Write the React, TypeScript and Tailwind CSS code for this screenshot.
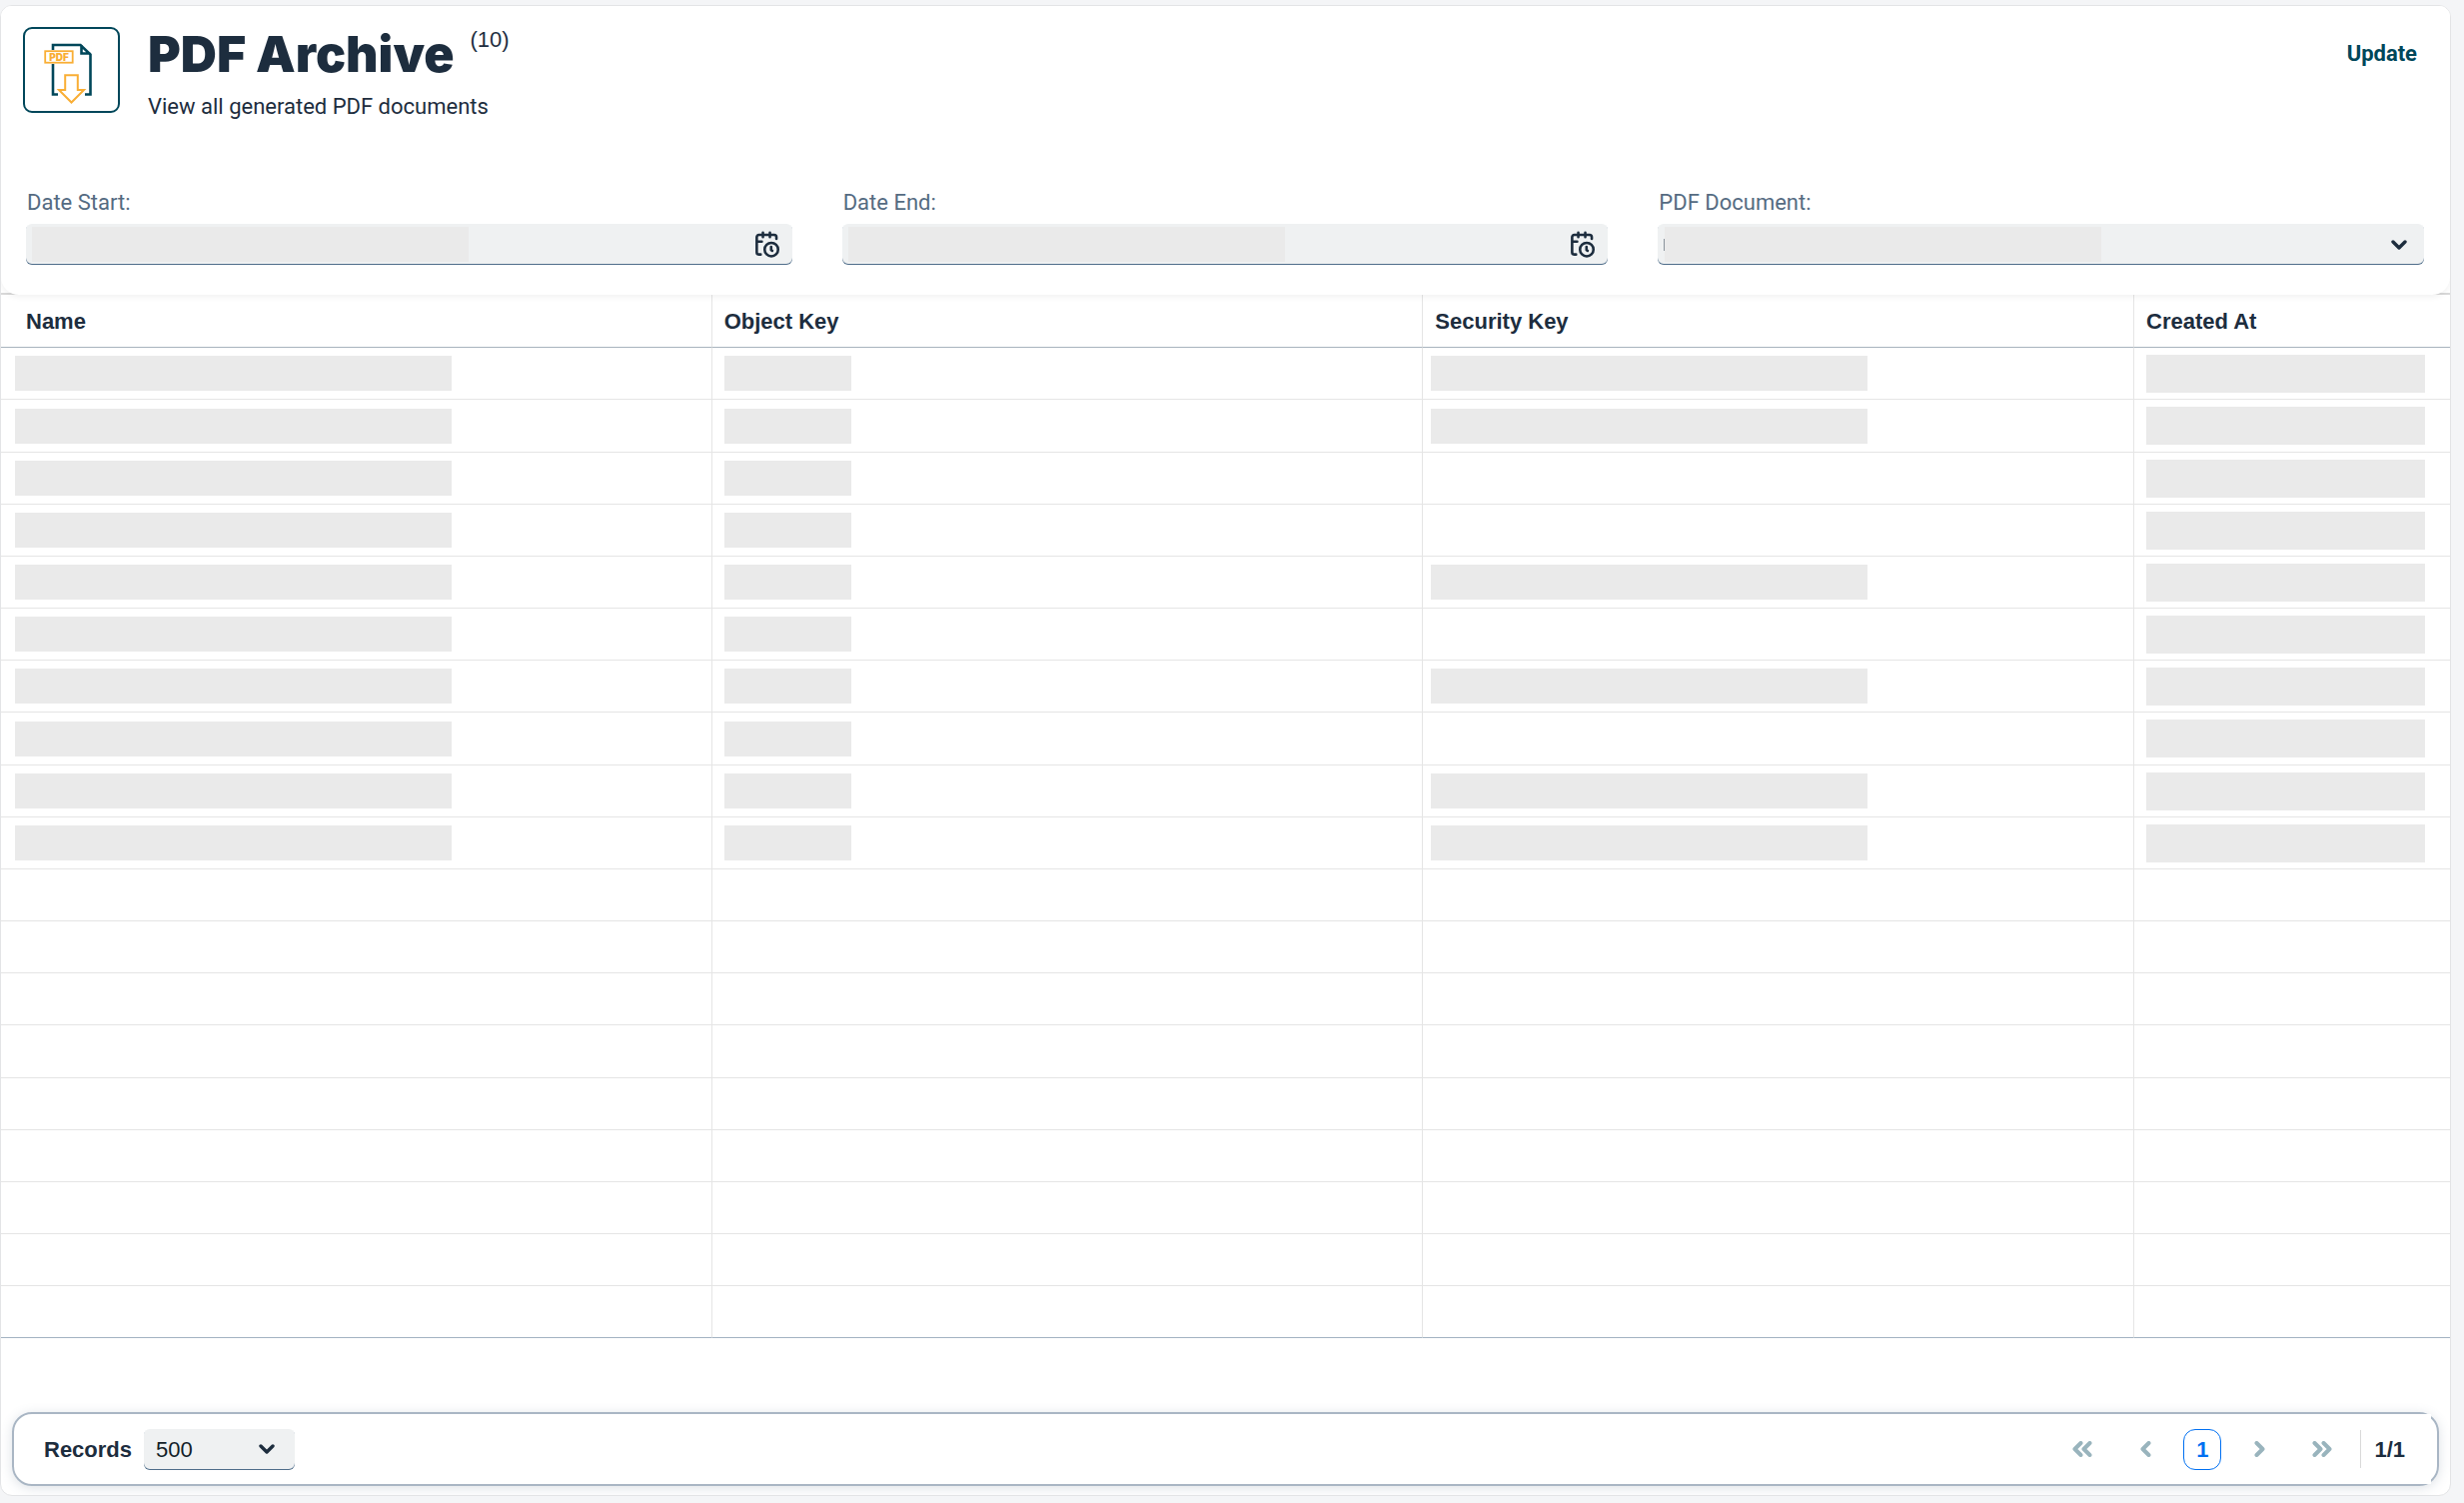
import type { ReactNode } from "react";

const columns = ["Name", "Object Key", "Security Key", "Created At"];

// One entry per archived document, true when it carries a security key
const documents = [true, true, false, false, true, false, true, false, true, true];

const EMPTY_ROWS = 9;

const PdfDownloadIcon = () => (
  <svg viewBox="25 29 93 82" className="h-full w-full" fill="none" aria-hidden="true">
    <path
      d="M53 50V45H80.5L90.5 54.5V94.5H85M53 64V94.5H58M81.5 45V53.5H90.5"
      stroke="#00475a"
      strokeWidth="2.6"
    />
    <rect x="45.2" y="51.2" width="27.5" height="11.5" stroke="#f9ae35" strokeWidth="1.8" />
    <text
      x="59"
      y="60.6"
      textAnchor="middle"
      fill="#f9ae35"
      fontFamily="Inter, sans-serif"
      fontSize="10"
      fontWeight="900"
    >
      PDF
    </text>
    <path
      d="M65.2 75.2H77.8V90H84L71.5 102.5L59 90H65.2Z"
      stroke="#f9ae35"
      strokeWidth="2"
    />
  </svg>
);

const CalendarClockIcon = () => (
  <svg
    viewBox="0 0 24 24"
    className="h-[27px] w-[27px]"
    fill="none"
    stroke="currentColor"
    strokeWidth="2.3"
    strokeLinecap="round"
    strokeLinejoin="round"
    aria-hidden="true"
  >
    <path d="M20.5 7V5.500a2 2 0 0 0-2-2H5a2 2 0 0 0-2 2V19a2 2 0 0 0 2 2h1.500M3 9.500h4.500M8.500 1.500v4M14.700 1.500v4" />
    <circle cx="16" cy="16.6" r="6" />
    <path d="M15.8 14.200v2.800l1 .7" />
  </svg>
);

const ChevronDown = () => (
  <svg
    viewBox="0 0 16 10"
    className="pointer-events-none h-[10px] w-4"
    fill="none"
    stroke="currentColor"
    strokeWidth="3.4"
    strokeLinecap="round"
    strokeLinejoin="round"
    aria-hidden="true"
  >
    <path d="M2 2l6 6 6-6" />
  </svg>
);

const Chevrons = ({ d, width }: { d: string; width: number }) => (
  <svg
    viewBox={`0 0 ${width} 16`}
    width={width}
    height={16}
    fill="none"
    stroke="currentColor"
    strokeWidth="4"
    strokeLinecap="round"
    strokeLinejoin="round"
    aria-hidden="true"
  >
    <path d={d} />
  </svg>
);

const Placeholder = ({ className }: { className: string }) => (
  <div className={`bg-[#eaeaea] ${className}`} />
);

const Field = ({ id, label, children }: { id: string; label: string; children: ReactNode }) => (
  <div>
    <label htmlFor={id} className="block pl-px text-[#556b82] leading-[30px]">
      {label}
    </label>
    <div className="mt-[6px] flex h-[41px] items-center rounded-md bg-[#eff1f2] shadow-[inset_0_-1px_0_#4f6d8a]">
      {children}
    </div>
  </div>
);

const DateField = ({ id, label }: { id: string; label: string }) => (
  <Field id={id} label={label}>
    <Placeholder className="ml-[6px] h-[35px] w-[437px] shrink-0" />
    <input id={id} type="text" className="h-full min-w-0 flex-1 bg-transparent px-2 outline-none" />
    <button type="button" aria-label={`Open calendar for ${label}`} className="mr-3">
      <CalendarClockIcon />
    </button>
  </Field>
);

const Header = () => (
  <header className="flex items-start px-[22px] pt-[21px]">
    <div className="h-[86px] w-[97px] shrink-0 rounded-[9px] border-2 border-[#00475a]">
      <PdfDownloadIcon />
    </div>
    <div className="ml-7 flex-1">
      <div className="flex items-start gap-4">
        <h1 className="font-['Inter',sans-serif] font-black text-[50px] leading-[54px]">
          PDF Archive
        </h1>
        <span className="font-['Liberation_Sans',sans-serif] leading-[26px]">(10)</span>
      </div>
      <p className="mt-[11px] leading-[30px]">View all generated PDF documents</p>
    </div>
    <button type="button" className="mr-[11px] font-bold text-[#00475a] leading-[54px]">
      Update
    </button>
  </header>
);

const Filters = () => (
  <form className="grid grid-cols-3 gap-[50px] pt-[66px] pr-[26px] pb-[30px] pl-[25px]">
    <DateField id="date-start" label="Date Start:" />
    <DateField id="date-end" label="Date End:" />
    <Field id="pdf-document" label="PDF Document:">
      <div className="ml-[6px] h-3 w-px bg-[#8a939c]" />
      <Placeholder className="h-[35px] w-[437px] shrink-0" />
      <select
        id="pdf-document"
        className="h-full min-w-0 flex-1 appearance-none bg-transparent outline-none"
      />
      <div className="mr-[17px]">
        <ChevronDown />
      </div>
    </Field>
  </form>
);

const ArchiveTable = () => (
  <table className="w-full table-fixed border-separate border-spacing-0">
    <thead>
      <tr>
        {columns.map((column) => (
          <th
            key={column}
            scope="col"
            className="h-[53px] border-[#e5e5e5] border-r border-b border-b-[#a8b3bd] pl-3 text-left font-['Liberation_Sans',sans-serif] font-bold first:pl-[25px] last:w-[316px] last:border-r-0"
          >
            {column}
          </th>
        ))}
      </tr>
    </thead>
    <tbody>
      {documents.map((hasSecurityKey, index) => (
        <tr
          key={index}
          className="h-[52px] nth-[6n+2]:h-[53px] *:border-[#e5e5e5] *:border-r *:border-b *:p-0 *:last:border-r-0"
        >
          <td>
            <Placeholder className="ml-[14px] h-[35px] w-[437px]" />
          </td>
          <td>
            <Placeholder className="ml-3 h-[35px] w-[127px]" />
          </td>
          <td>{hasSecurityKey && <Placeholder className="ml-2 h-[35px] w-[437px]" />}</td>
          <td>
            <Placeholder className="ml-3 h-[38px] w-[279px]" />
          </td>
        </tr>
      ))}
      {Array.from({ length: EMPTY_ROWS }, (_, index) => (
        <tr
          key={`empty-${index}`}
          className="h-[52px] nth-[6n+2]:h-[53px] *:border-[#e5e5e5] *:border-r *:border-b *:p-0 *:last:border-r-0 last:*:border-b-[#a3b3c2]"
        >
          {columns.map((column) => (
            <td key={column} />
          ))}
        </tr>
      ))}
    </tbody>
  </table>
);

const Pagination = () => (
  <nav aria-label="Pagination" className="flex items-center gap-[19px] text-[#99b4bd]">
    <button type="button" aria-label="First page" className="flex w-[50px] justify-center">
      <Chevrons d="M8.500 2l-6 6 6 6M17.500 2l-6 6 6 6" width={20} />
    </button>
    <button type="button" aria-label="Previous page" className="flex w-[38px] justify-center">
      <Chevrons d="M8.500 2l-6 6 6 6" width={11} />
    </button>
    <button
      type="button"
      aria-current="page"
      className="h-[41px] w-[38px] rounded-xl border border-[#0070f2] font-['Liberation_Sans',sans-serif] font-bold text-[#0070f2]"
    >
      1
    </button>
    <button type="button" aria-label="Next page" className="flex w-[38px] justify-center">
      <Chevrons d="M2.500 2l6 6-6 6" width={11} />
    </button>
    <button type="button" aria-label="Last page" className="flex w-[50px] justify-center">
      <Chevrons d="M2.500 2l6 6-6 6M11.500 2l6 6-6 6" width={20} />
    </button>
  </nav>
);

const Footer = () => (
  <footer className="mx-[11px] mt-[74px] mb-[9px] h-[74px] rounded-[20px] border-2 border-[#a9b6c4] pr-[6px] pl-[30px] font-['Liberation_Sans',sans-serif] shadow-[0_2px_12px_rgba(85,107,130,0.2)]">
    <div className="flex h-full items-center bg-white pr-[26px]">
      <label htmlFor="records" className="font-bold">
        Records
      </label>
      <div className="relative ml-3 flex h-[41px] w-[151px] items-center">
        <select
          id="records"
          defaultValue="500"
          className="h-full w-full appearance-none rounded-md bg-[#eff1f2] pl-3 text-[#131e29] shadow-[inset_0_-1px_0_#4f6d8a] outline-none"
        >
          <option>100</option>
          <option>500</option>
        </select>
        <div className="pointer-events-none absolute right-5">
          <ChevronDown />
        </div>
      </div>
      <div className="ml-auto flex items-center gap-[13px]">
        <Pagination />
        <div className="h-[38px] w-px bg-[#d9d9d9]" />
        <span className="font-bold">1/1</span>
      </div>
    </div>
  </footer>
);

export default function App() {
  return (
    <div className="min-h-screen bg-[#f4f5f7] pt-[5px] pr-[13px] font-['Roboto',sans-serif] text-[#1d2d3e] text-[22px]">
      <main className="overflow-hidden rounded-xl border border-[#e3e4e6] bg-white">
        {/* The grey strip only shows past the rounded bottom corners of the toolbar */}
        <div className="relative bg-[linear-gradient(to_top,#d9d9d9_2px,#fff_2px)]">
          <div className="rounded-b-[18px] bg-white shadow-[0_2px_6px_rgba(0,0,0,0.06)]">
            <Header />
            <Filters />
          </div>
        </div>
        <ArchiveTable />
        <Footer />
      </main>
    </div>
  );
}
